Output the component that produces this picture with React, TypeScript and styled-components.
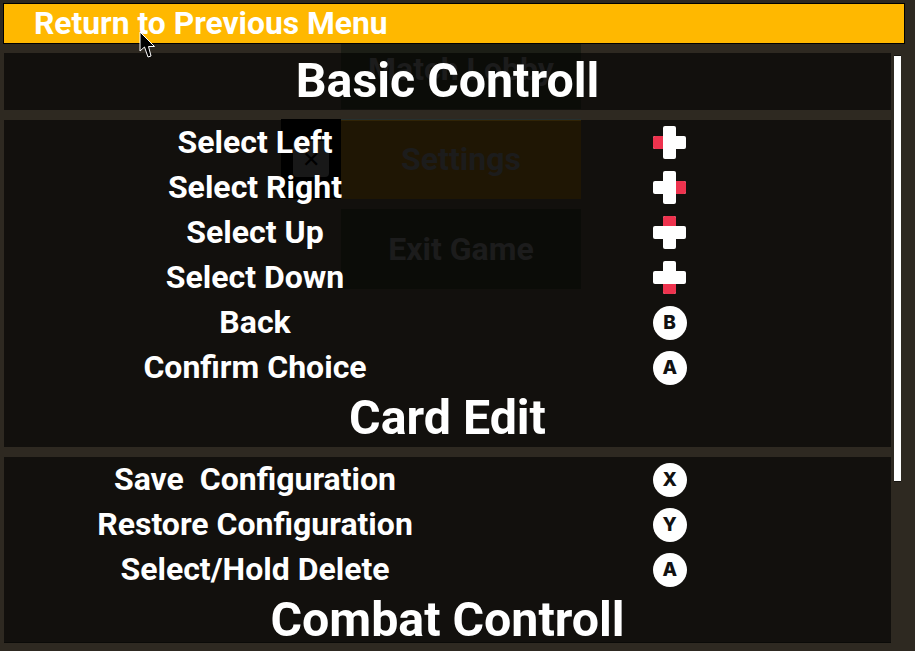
import React from 'react';
import styled, { createGlobalStyle } from 'styled-components';

const GlobalStyle = createGlobalStyle`
  html, body {
    margin: 0;
    padding: 0;
    background: #2e2921;
  }
  * {
    box-sizing: border-box;
  }
`;

type RowType = {
  label: string,
  button: string
};

const basicRows: RowType[] = [
  { label: 'Select Left', button: 'left' },
  { label: 'Select Right', button: 'right' },
  { label: 'Select Up', button: 'up' },
  { label: 'Select Down', button: 'down' },
  { label: 'Back', button: 'B' },
  { label: 'Confirm Choice', button: 'A' },
];

const editRows: RowType[] = [
  { label: 'Save  Configuration', button: 'X' },
  { label: 'Restore Configuration', button: 'Y' },
  { label: 'Select/Hold Delete', button: 'A' },
];

const DPad = ({ dir }: { dir: string }) => {
  return (
    <svg width="34" height="33" viewBox="0 0 34 33" style={{ display: 'block' }}>
      <rect x="11" y="0" width="13" height="33" rx="2" fill="#ffffff" />
      <rect x="1" y="10" width="33" height="13" rx="2" fill="#ffffff" />
      {dir === 'left' && <path d="M11 10H3a2 2 0 0 0-2 2v9a2 2 0 0 0 2 2h8z" fill="#ee334e" />}
      {dir === 'right' && <path d="M24 10h8a2 2 0 0 1 2 2v9a2 2 0 0 1-2 2h-8z" fill="#ee334e" />}
      {dir === 'up' && <path d="M11 10V2a2 2 0 0 1 2-2h9a2 2 0 0 1 2 2v8z" fill="#ee334e" />}
      {dir === 'down' && <path d="M11 23v8a2 2 0 0 0 2 2h9a2 2 0 0 0 2-2v-8z" fill="#ee334e" />}
    </svg>
  );
};

const renderRows = (rows: RowType[]) => {
  return rows.map((row: RowType, i: number) => {
    let isLetter = row.button.length === 1;
    return (
      <Row key={i}>
        <RowLabel>{row.label}</RowLabel>
        <RowIcon>
          {isLetter ? <RoundButton>{row.button}</RoundButton> : <DPad dir={row.button} />}
        </RowIcon>
      </Row>
    );
  });
};

export default function App() {
  return (
    <Page>
      <GlobalStyle />
      <Backdrop>
        <CloseSlot><CloseButton>✕</CloseButton></CloseSlot>
        <MenuButtons>
          <MenuButton>Match Lobby</MenuButton>
          <MenuButton selected={true}>Settings</MenuButton>
          <MenuButton>Exit Game</MenuButton>
        </MenuButtons>
      </Backdrop>

      <ReturnBar>Return to Previous Menu</ReturnBar>

      <Body>
        <ScrollArea>
          <Panel>
            <Title>Basic Controll</Title>
          </Panel>
          <Panel>
            {renderRows(basicRows)}
            <Title>Card Edit</Title>
          </Panel>
          <Panel>
            {renderRows(editRows)}
            <Title>Combat Controll</Title>
          </Panel>
        </ScrollArea>
        <ScrollBar />
      </Body>

      <Cursor width="17" height="29" viewBox="0 0 17 29">
        <path d="M1 2V21L5.500 17L9 27L12 26L9.500 16.500L15.500 16.500Z" fill="#000000" stroke="#ffffff" strokeWidth="1" />
      </Cursor>
    </Page>
  );
}

const Page = styled.div`
  position: relative;
  width: 915px;
  height: 651px;
  overflow: hidden;
  background: #2e2921;
  font-family: Roboto, 'Liberation Sans', sans-serif;
`;

const Backdrop = styled.div`
  position: absolute;
  top: 29px;
  left: 281px;
  display: flex;
  align-items: flex-start;
`;

const CloseSlot = styled.div`
  width: 60px;
  height: 80px;
  margin-top: 90px;
  background: #000000;
  display: flex;
  align-items: center;
  justify-content: center;
`;

const CloseButton = styled.div`
  width: 36px;
  height: 36px;
  border-radius: 4px;
  background: #3c3c3c;
  color: #000000;
  font-size: 22px;
  display: flex;
  align-items: center;
  justify-content: center;
`;

const MenuButtons = styled.div`
  display: flex;
  flex-direction: column;
  gap: 10px;
`;

const MenuButton = styled.div<{ selected?: boolean }>`
  width: 240px;
  height: 80px;
  background: ${props => props.selected ? '#4e370c' : '#1c1e16'};
  box-shadow: ${props => props.selected ? 'inset 0 1px 0 #25302f, inset 0 2px 0 #7a5a10' : 'none'};
  color: #474747;
  font-size: 32px;
  font-weight: 700;
  display: flex;
  align-items: center;
  justify-content: center;
`;

const ReturnBar = styled.div`
  position: relative;
  height: 41px;
  margin: 3px 10px 0px 3px;
  padding-left: 30px;
  background: #ffb800;
  border: 1px solid #000000;
  color: #ffffff;
  font-size: 31.8px;
  font-weight: 700;
  line-height: 39px;
`;

const Body = styled.div`
  position: relative;
  display: flex;
  align-items: flex-start;
  margin-top: 9px;
  padding-left: 4px;
`;

const ScrollArea = styled.div`
  width: 887px;
  height: 590px;
  overflow: hidden;
  display: flex;
  flex-direction: column;
  gap: 10px;
  border-bottom: 1px solid #0a0a08;
`;

const Panel = styled.div`
  flex-shrink: 0;
  background: rgba(0, 0, 0, 0.6);
`;

const Title = styled.div`
  height: 57px;
  color: #ffffff;
  font-size: 48.3px;
  font-weight: 700;
  line-height: 55px;
  text-align: center;
`;

const Row = styled.div`
  height: 45px;
  display: flex;
  align-items: center;
`;

const RowLabel = styled.div`
  width: 502px;
  padding-bottom: 2px;
  color: #ffffff;
  font-size: 32px;
  font-weight: 700;
  text-align: center;
  white-space: pre;
`;

const RowIcon = styled.div`
  margin-left: 146px;
  width: 34px;
  height: 33px;
`;

const RoundButton = styled.div`
  width: 34px;
  height: 34px;
  margin: -0.5px 0px 0px 0.7px;
  border-radius: 50%;
  background: #ffffff;
  color: #111111;
  font-family: Inter, sans-serif;
  font-size: 19px;
  font-weight: 800;
  display: flex;
  align-items: center;
  justify-content: center;
`;

const ScrollBar = styled.div`
  width: 7px;
  height: 427px;
  margin-left: 3px;
  margin-top: 2px;
  background: #ffffff;
  border-top: 1px solid #161410;
  border-bottom: 1px solid #161410;
`;

const Cursor = styled.svg`
  position: absolute;
  top: 30px;
  left: 139px;
`;
